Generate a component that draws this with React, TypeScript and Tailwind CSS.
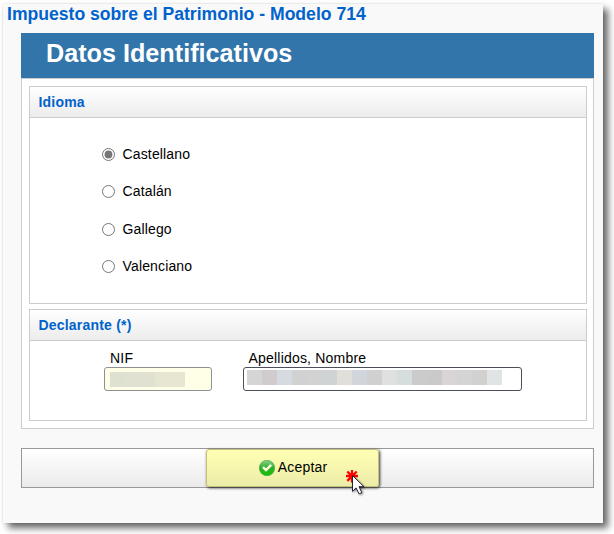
import React, { useState } from 'react';

const LANGUAGES = ['Castellano', 'Catalán', 'Gallego', 'Valenciano'];

interface SectionProps {
  title: string;
  className: string;
  children: React.ReactNode;
}

const Section: React.FC<SectionProps> = ({ title, className, children }) => (
  <section className={`border border-[#ccc] bg-white ${className}`}>
    <h2 className="h-[31px] border-b border-[#ccc] bg-linear-to-b from-white to-[#ececec] pl-[8.5px] text-[14px] leading-[30px] font-bold tracking-[0.2px] text-[#0063cb]">
      {title}
    </h2>
    {children}
  </section>
);

const CheckIcon = () => (
  <svg width="16" height="16" viewBox="0 0 16 16" className="shrink-0">
    <defs>
      <linearGradient id="check" x1="0" y1="0" x2="0" y2="1">
        <stop offset="0" stopColor="#8ad08a" />
        <stop offset="0.5" stopColor="#2fae2c" />
        <stop offset="1" stopColor="#14c400" />
      </linearGradient>
    </defs>
    <circle cx="8" cy="8" r="7.7" fill="url(#check)" stroke="#3aa53a" strokeWidth="0.6" />
    <path d="M3.9 7.2 L7 10 L12.2 4.8" fill="none" stroke="#fbffd8" strokeWidth="2.4" />
  </svg>
);

// Red click mark with the mouse pointer on top
const Pointer = () => (
  <svg width="24" height="30" viewBox="0 0 24 30" className="absolute top-[19px] left-[137px]">
    <path d="M9 2v12.5M3 8h12M4.3 3.5l9.4 9.4M13.7 3.5l-9.4 9.4" stroke="#f00" strokeWidth="2.3" />
    <path
      d="M9.5 7.5v15.8l3.6-3.4 3 6 2.8-1.3-2.9-5.9h5z"
      fill="#fff"
      stroke="#223"
      strokeWidth="1"
      className="drop-shadow-[1px_1px_1px_rgba(0,0,0,0.45)]"
    />
  </svg>
);

export default function App() {
  const [language, setLanguage] = useState('Castellano');

  return (
    <div className="h-[534px] w-[614px] overflow-hidden bg-white pt-[4px] pl-[3px] font-['Liberation_Sans',Arial,sans-serif] text-[14px] text-black">
      <main className="h-[519px] w-[600px] bg-[#f9f9f9] pl-[18px] shadow-[5px_5px_7px_rgba(0,0,0,0.6),0_0_2px_rgba(0,0,0,0.12)]">
        <h1 className="-ml-[14px] h-[29px] text-[17.6px] leading-[21px] font-bold whitespace-nowrap text-[#0063cb]">
          Impuesto sobre el Patrimonio - Modelo 714
        </h1>

        <div className="h-[45px] w-[573px] bg-[#3275ab] pl-[25px] text-[25.2px] leading-[41px] font-bold text-white">
          Datos Identificativos
        </div>

        <div className="flex h-[351px] w-[573px] flex-col gap-[5px] border border-[#ccc] bg-white px-[7px] pt-[7px]">
          <Section title="Idioma" className="h-[218px] w-[558px]">
            <div className="flex flex-col gap-[17.5px] pt-[26px] pl-[72px]">
              {LANGUAGES.map((name) => (
                <label key={name} className="flex h-5 items-center gap-[7.5px] tracking-[0.15px]">
                  <input
                    type="radio"
                    name="language"
                    checked={language === name}
                    onChange={() => setLanguage(name)}
                    className="m-0 size-[13px] accent-[#767676]"
                  />
                  {name}
                </label>
              ))}
            </div>
          </Section>

          <Section title="Declarante (*)" className="h-[112px] w-[558px]">
            <div className="flex gap-[31px] pt-[8px] pl-[74px] tracking-[0.2px]">
              <div className="w-[108px]">
                <div className="h-[18px] pl-[6px] leading-[18px]">NIF</div>
                <div className="h-[24px] rounded-[3px] border border-[#8f8f94] bg-[#ffffe8] pt-[4px] pl-[5px]">
                  <div className="flex h-[15px] w-[75px]">
                    <span className="w-[15px] bg-[#dee0d0]" />
                    <span className="w-[30px] bg-[#e0e1d0]" />
                    <span className="w-[30px] bg-[#e6e6d3]" />
                  </div>
                </div>
              </div>
              <div className="w-[279px]">
                <div className="h-[18px] pl-[5.5px] leading-[18px]">Apellidos, Nombre</div>
                <div className="h-[24px] rounded-[3px] border border-[#4b4f59] bg-white pt-[2px] pl-[3px]">
                  <div className="grid h-[15px] w-[255px] grid-cols-17">
                    <span className="bg-[#d6d5d5]" />
                    <span className="bg-[#d0cbcd]" />
                    <span className="bg-[#d5dbe0]" />
                    <span className="bg-[#d1d1d2]" />
                    <span className="bg-[#d3d2d2]" />
                    <span className="bg-[#cfd3d4]" />
                    <span className="bg-[#e0dfda]" />
                    <span className="bg-[#d1d5dc]" />
                    <span className="bg-[#cfd0cf]" />
                    <span className="bg-[#dfe1e1]" />
                    <span className="bg-[#d6dddd]" />
                    <span className="bg-[#cbcbcb]" />
                    <span className="bg-[#cbcaca]" />
                    <span className="bg-[#d9d5d7]" />
                    <span className="bg-[#d4d4d4]" />
                    <span className="bg-[#d2d1cf]" />
                    <span className="bg-[#e0e4e5]" />
                  </div>
                </div>
              </div>
            </div>
          </Section>
        </div>

        <div className="mt-[19px] flex h-[40px] w-[573px] border border-[#999] bg-linear-to-b from-white to-[#ebebeb] pl-[184px]">
          <div className="relative h-[38px] w-[173px]">
            <button className="flex h-full w-full items-center justify-center gap-[3px] rounded-[3px] border border-[#c4c17e] bg-linear-to-b from-[#ffffb4] to-[#ececa9] pl-[1px] tracking-[0.2px] shadow-[1px_1px_3px_rgba(0,0,0,0.8)]">
              <CheckIcon />
              <span className="pb-[2px]">Aceptar</span>
            </button>
            <Pointer />
          </div>
        </div>
      </main>
    </div>
  );
}
